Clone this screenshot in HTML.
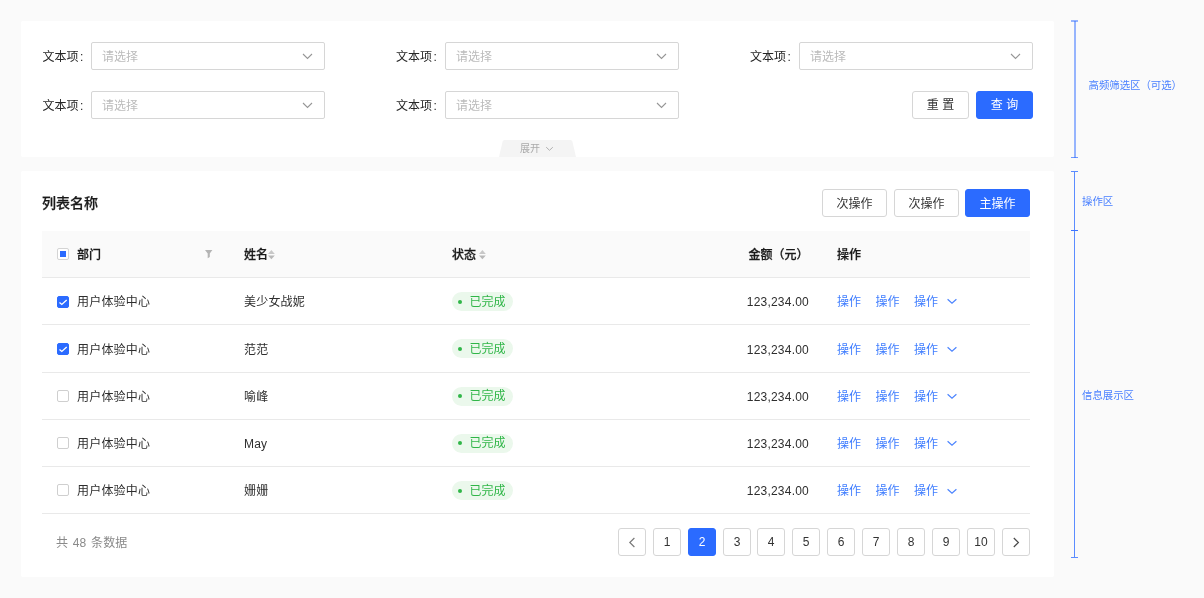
<!DOCTYPE html>
<html lang="zh-CN">
<head>
<meta charset="utf-8">
<title>列表页</title>
<style>
*{box-sizing:border-box;margin:0;padding:0}
html,body{width:1204px;height:598px;overflow:hidden;background:#fafafa}
body{position:relative;will-change:transform;font-family:"Liberation Sans","Noto Sans CJK SC",sans-serif;font-size:12px;color:#2e2e2e;-webkit-font-smoothing:antialiased}
.abs{position:absolute}
.panel{position:absolute;background:#fff;border-radius:2px}
.t{position:absolute;white-space:nowrap;line-height:20px;height:20px}
.lbl{color:#262626}
.lbl b{font-weight:400;margin-left:1.5px}
.sel{position:absolute;width:234px;height:28px;border:1px solid #d6d6d6;border-radius:2px;background:#fff}
.sel .ph{position:absolute;left:10px;top:4px;line-height:20px;color:#bbb;white-space:nowrap}
.sel svg{position:absolute;right:11px;top:10px}
.btn{position:absolute;height:28px;border:1px solid #d6d6d6;border-radius:3px;background:#fff;text-align:center;line-height:26px;color:#333;white-space:nowrap}
.btn.pri{background:#2b6bff;border-color:#2b6bff;color:#fff}
.hd{font-weight:500;color:#1a1a1a;-webkit-text-stroke:0.25px #1a1a1a}
.line{position:absolute;left:42px;width:988px;height:1px;background:#e9e9e9}
.cb{position:absolute;left:57px;width:12px;height:12px;border:1px solid #cfcfcf;border-radius:2px;background:#fff}
.cb.on{background:#2b6bff;border-color:#2b6bff}
.cb.on svg{position:absolute;left:-1px;top:-1px}
.cb.ind i{position:absolute;left:2px;top:2px;width:6px;height:6px;background:#2b6bff}
.tag{position:absolute;left:452px;width:61px;height:19px;border-radius:10px;background:#ebf8ec}
.tag i{position:absolute;left:6px;top:7.5px;width:4px;height:4px;border-radius:50%;background:#30b648}
.tag span{position:absolute;left:17.5px;top:-0.5px;line-height:20px;color:#30b648;white-space:nowrap}
.lnk{color:#3f7dff}
.pg{position:absolute;top:528px;width:28px;height:28px;border:1px solid #d6d6d6;border-radius:3px;background:#fff;text-align:center;line-height:27px;color:#333}
.pg.on{background:#2b6bff;border-color:#2b6bff;color:#fff}
.pg svg{position:absolute;left:9px;top:7.5px}
.ann{position:absolute;background:#5b8cff}
.annt{position:absolute;font-size:10.4px;line-height:14px;color:#4a80ff;white-space:nowrap}
</style>
</head>
<body>

<!-- ===== filter panel ===== -->
<div class="panel" style="left:21px;top:21px;width:1033px;height:136px"></div>

<div class="t lbl" style="left:42.5px;top:47px">文本项<b>:</b></div>
<div class="sel" style="left:91px;top:42px"><span class="ph">请选择</span><svg width="11" height="7" viewBox="0 0 11 7"><path d="M1 1 L5.5 5.5 L10 1" fill="none" stroke="#969696" stroke-width="1.1"/></svg></div>
<div class="t lbl" style="left:396px;top:47px">文本项<b>:</b></div>
<div class="sel" style="left:445px;top:42px"><span class="ph">请选择</span><svg width="11" height="7" viewBox="0 0 11 7"><path d="M1 1 L5.5 5.5 L10 1" fill="none" stroke="#969696" stroke-width="1.1"/></svg></div>
<div class="t lbl" style="left:750px;top:47px">文本项<b>:</b></div>
<div class="sel" style="left:799px;top:42px"><span class="ph">请选择</span><svg width="11" height="7" viewBox="0 0 11 7"><path d="M1 1 L5.5 5.5 L10 1" fill="none" stroke="#969696" stroke-width="1.1"/></svg></div>

<div class="t lbl" style="left:42.5px;top:96px">文本项<b>:</b></div>
<div class="sel" style="left:91px;top:91px"><span class="ph">请选择</span><svg width="11" height="7" viewBox="0 0 11 7"><path d="M1 1 L5.5 5.5 L10 1" fill="none" stroke="#969696" stroke-width="1.1"/></svg></div>
<div class="t lbl" style="left:396px;top:96px">文本项<b>:</b></div>
<div class="sel" style="left:445px;top:91px"><span class="ph">请选择</span><svg width="11" height="7" viewBox="0 0 11 7"><path d="M1 1 L5.5 5.5 L10 1" fill="none" stroke="#969696" stroke-width="1.1"/></svg></div>

<div class="btn" style="left:912px;top:91px;width:57px">重 置</div>
<div class="btn pri" style="left:976px;top:91px;width:57px">查 询</div>

<!-- expand tab -->
<svg class="abs" style="left:499px;top:140px" width="77" height="17" viewBox="0 0 77 17"><path d="M5.5 0 H71.5 Q73 0 73.4 1.5 L77 17 H0 L3.6 1.5 Q4 0 5.5 0 Z" fill="#f4f4f4"/></svg>
<div class="t" style="left:520px;top:141.5px;font-size:10px;line-height:14px;height:14px;color:#aaa">展开</div>
<svg class="abs" style="left:545px;top:146px" width="9" height="6" viewBox="0 0 9 6"><path d="M1.2 1.2 L4.5 4.3 L7.8 1.2" fill="none" stroke="#b0b0b0" stroke-width="1"/></svg>

<!-- ===== table panel ===== -->
<div class="panel" style="left:21px;top:171px;width:1033px;height:406px"></div>
<div class="t hd" style="left:42px;top:193px;font-size:14px">列表名称</div>
<div class="btn" style="left:822px;top:189px;width:65px;line-height:28px">次操作</div>
<div class="btn" style="left:894px;top:189px;width:65px;line-height:28px">次操作</div>
<div class="btn pri" style="left:965px;top:189px;width:65px;line-height:28px">主操作</div>

<!-- header -->
<div class="abs" style="left:42px;top:231px;width:988px;height:46px;background:#fafafa"></div>
<div class="line" style="top:277px"></div>
<div class="cb ind" style="top:248px;border-color:#d4d4d4"><i></i></div>
<div class="t hd" style="left:77px;top:244.5px">部门</div>
<svg class="abs" style="left:205px;top:250px" width="8" height="9" viewBox="0 0 8 9"><path d="M0 0.1 H7.4 L4.8 3.6 V7.1 L2.7 8.3 V3.6 Z" fill="#b4b4b4"/></svg>
<div class="t hd" style="left:244px;top:244.5px">姓名</div>
<svg class="abs" style="left:267.9px;top:250px" width="7" height="10" viewBox="0 0 7 10"><path d="M3.4 0.1 L6.8 3.9 H0 Z" fill="#c8c8c8"/><path d="M0 5.4 H6.8 L3.4 9.3 Z" fill="#b8b8b8"/></svg>
<div class="t hd" style="left:452px;top:244.5px">状态</div>
<svg class="abs" style="left:478.6px;top:250px" width="7" height="10" viewBox="0 0 7 10"><path d="M3.4 0.1 L6.8 3.9 H0 Z" fill="#c8c8c8"/><path d="M0 5.4 H6.8 L3.4 9.3 Z" fill="#b8b8b8"/></svg>
<div class="t hd" style="left:748.5px;top:244.5px">金额（元）</div>
<div class="t hd" style="left:837px;top:244.5px">操作</div>

<!-- rows -->
<!-- ROWS -->
<div class="cb on" style="top:295.5px"><svg width="12" height="12" viewBox="0 0 12 12"><path d="M2.5 6.4 L4.8 8.4 L9.7 3.9" fill="none" stroke="#fff" stroke-width="1.3"/></svg></div>
<div class="t" style="left:77px;letter-spacing:0.2px;top:292px">用户体验中心</div>
<div class="t" style="left:244px;letter-spacing:0.2px;top:292px">美少女战妮</div>
<div class="tag" style="top:292.0px"><i></i><span>已完成</span></div>
<div class="t" style="left:709px;width:100px;text-align:right;letter-spacing:0.22px;top:292px">123,234.00</div>
<div class="t lnk" style="left:837px;top:292px">操作</div>
<div class="t lnk" style="left:875.5px;top:292px">操作</div>
<div class="t lnk" style="left:914px;top:292px">操作</div>
<svg class="abs" style="left:947px;top:298px" width="10" height="7" viewBox="0 0 10 7"><path d="M0.6 1.3 L5 5.3 L9.4 1.3" fill="none" stroke="#4a83ff" stroke-width="1.15"/></svg>
<div class="line" style="top:324px"></div>
<div class="cb on" style="top:343px"><svg width="12" height="12" viewBox="0 0 12 12"><path d="M2.5 6.4 L4.8 8.4 L9.7 3.9" fill="none" stroke="#fff" stroke-width="1.3"/></svg></div>
<div class="t" style="left:77px;letter-spacing:0.2px;top:340px">用户体验中心</div>
<div class="t" style="left:244px;letter-spacing:0.2px;top:340px">范范</div>
<div class="tag" style="top:339.3px"><i></i><span>已完成</span></div>
<div class="t" style="left:709px;width:100px;text-align:right;letter-spacing:0.22px;top:340px">123,234.00</div>
<div class="t lnk" style="left:837px;top:340px">操作</div>
<div class="t lnk" style="left:875.5px;top:340px">操作</div>
<div class="t lnk" style="left:914px;top:340px">操作</div>
<svg class="abs" style="left:947px;top:346px" width="10" height="7" viewBox="0 0 10 7"><path d="M0.6 1.3 L5 5.3 L9.4 1.3" fill="none" stroke="#4a83ff" stroke-width="1.15"/></svg>
<div class="line" style="top:372px"></div>
<div class="cb" style="top:390px"></div>
<div class="t" style="left:77px;letter-spacing:0.2px;top:387px">用户体验中心</div>
<div class="t" style="left:244px;letter-spacing:0.2px;top:387px">喻峰</div>
<div class="tag" style="top:386.5px"><i></i><span>已完成</span></div>
<div class="t" style="left:709px;width:100px;text-align:right;letter-spacing:0.22px;top:387px">123,234.00</div>
<div class="t lnk" style="left:837px;top:387px">操作</div>
<div class="t lnk" style="left:875.5px;top:387px">操作</div>
<div class="t lnk" style="left:914px;top:387px">操作</div>
<svg class="abs" style="left:947px;top:393px" width="10" height="7" viewBox="0 0 10 7"><path d="M0.6 1.3 L5 5.3 L9.4 1.3" fill="none" stroke="#4a83ff" stroke-width="1.15"/></svg>
<div class="line" style="top:419px"></div>
<div class="cb" style="top:437px"></div>
<div class="t" style="left:77px;letter-spacing:0.2px;top:434px">用户体验中心</div>
<div class="t" style="left:244px;letter-spacing:0.2px;top:434px">May</div>
<div class="tag" style="top:433.7px"><i></i><span>已完成</span></div>
<div class="t" style="left:709px;width:100px;text-align:right;letter-spacing:0.22px;top:434px">123,234.00</div>
<div class="t lnk" style="left:837px;top:434px">操作</div>
<div class="t lnk" style="left:875.5px;top:434px">操作</div>
<div class="t lnk" style="left:914px;top:434px">操作</div>
<svg class="abs" style="left:947px;top:440px" width="10" height="7" viewBox="0 0 10 7"><path d="M0.6 1.3 L5 5.3 L9.4 1.3" fill="none" stroke="#4a83ff" stroke-width="1.15"/></svg>
<div class="line" style="top:466px"></div>
<div class="cb" style="top:484px"></div>
<div class="t" style="left:77px;letter-spacing:0.2px;top:481px">用户体验中心</div>
<div class="t" style="left:244px;letter-spacing:0.2px;top:481px">姗姗</div>
<div class="tag" style="top:481.0px"><i></i><span>已完成</span></div>
<div class="t" style="left:709px;width:100px;text-align:right;letter-spacing:0.22px;top:481px">123,234.00</div>
<div class="t lnk" style="left:837px;top:481px">操作</div>
<div class="t lnk" style="left:875.5px;top:481px">操作</div>
<div class="t lnk" style="left:914px;top:481px">操作</div>
<svg class="abs" style="left:947px;top:488px" width="10" height="7" viewBox="0 0 10 7"><path d="M0.6 1.3 L5 5.3 L9.4 1.3" fill="none" stroke="#4a83ff" stroke-width="1.15"/></svg>
<div class="line" style="top:513px"></div>
<!-- /ROWS -->

<!-- footer -->
<div class="t" style="left:56px;top:532.5px;color:#8a8a8a;word-spacing:1.3px;letter-spacing:0.1px">共 48 条数据</div>
<!-- PAGES -->
<div class="pg" style="left:618px"><svg width="8" height="11" viewBox="0 0 8 11"><path d="M6.4 1 L1.8 5.5 L6.4 10" fill="none" stroke="#7a7a7a" stroke-width="1.2"/></svg></div>
<div class="pg" style="left:653px">1</div>
<div class="pg on" style="left:688px">2</div>
<div class="pg" style="left:723px">3</div>
<div class="pg" style="left:757px">4</div>
<div class="pg" style="left:792px">5</div>
<div class="pg" style="left:827px">6</div>
<div class="pg" style="left:862px">7</div>
<div class="pg" style="left:897px">8</div>
<div class="pg" style="left:932px">9</div>
<div class="pg" style="left:967px">10</div>
<div class="pg" style="left:1002px"><svg width="8" height="11" viewBox="0 0 8 11"><path d="M1.8 1 L6.4 5.5 L1.8 10" fill="none" stroke="#4a4a4a" stroke-width="1.2"/></svg></div>
<!-- /PAGES -->

<!-- ===== annotations ===== -->
<!-- ANN -->
<div class="ann" style="left:1074px;top:21px;width:2px;height:137px;background:rgba(50,110,255,.5)"></div>
<div class="ann" style="left:1071px;top:20px;width:7px;height:2px;background:rgba(50,110,255,.5)"></div>
<div class="ann" style="left:1071px;top:157px;width:7px;height:1px;background:rgba(50,110,255,.7)"></div>
<div class="annt" style="left:1088.5px;top:79px">高频筛选区（可选）</div>
<div class="ann" style="left:1074px;top:171px;width:1px;height:387px"></div>
<div class="ann" style="left:1071px;top:171px;width:7px;height:1px"></div>
<div class="ann" style="left:1071px;top:230px;width:7px;height:1px;background:#3d74ff"></div>
<div class="ann" style="left:1071px;top:557px;width:7px;height:1px"></div>
<div class="annt" style="left:1082px;top:195px">操作区</div>
<div class="annt" style="left:1082px;top:389px">信息展示区</div>
<!-- /ANN -->

</body>
</html>
